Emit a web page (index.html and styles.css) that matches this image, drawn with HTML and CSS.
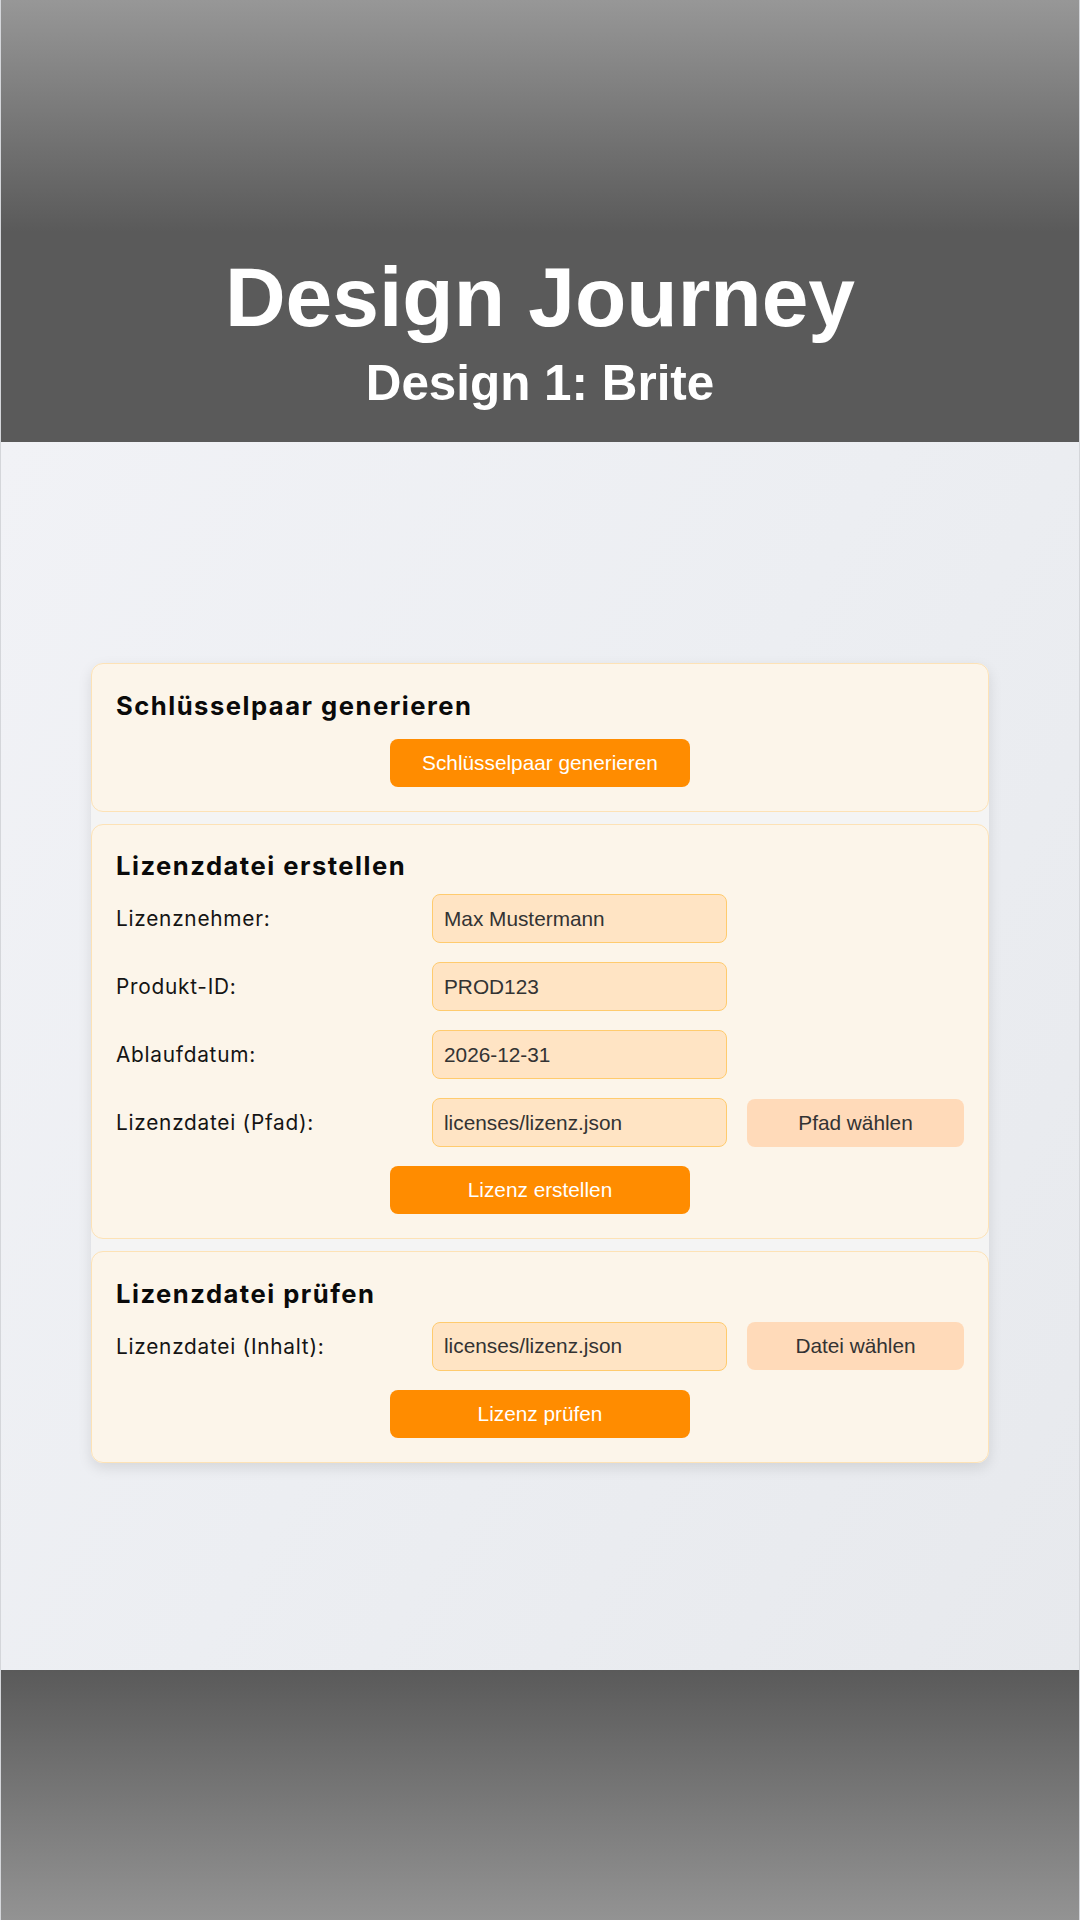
FILE: index.html
```html
<!DOCTYPE html>
<html lang="de">
<head>
<meta charset="utf-8">
<title>Design Journey – Brite</title>
<link rel="stylesheet" href="styles.css">
</head>
<body>
<header class="hero">
  <h1 class="hero-title">Design Journey</h1>
  <h2 class="hero-sub">Design 1: Brite</h2>
</header>
<main class="stage">
  <div class="panel">
    <section class="card">
      <h3 class="card-title">Schlüsselpaar generieren</h3>
      <div class="actions"><button class="btn-primary">Schlüsselpaar generieren</button></div>
    </section>
    <section class="card">
      <h3 class="card-title">Lizenzdatei erstellen</h3>
      <div class="form">
        <div class="row"><label class="label">Lizenznehmer:</label><input class="field" value="Max Mustermann"></div>
        <div class="row"><label class="label">Produkt-ID:</label><input class="field" value="PROD123"></div>
        <div class="row"><label class="label">Ablaufdatum:</label><input class="field" value="2026-12-31"></div>
        <div class="row"><label class="label">Lizenzdatei (Pfad):</label><input class="field" value="licenses/lizenz.json"><button class="btn-soft">Pfad wählen</button></div>
      </div>
      <div class="actions"><button class="btn-primary">Lizenz erstellen</button></div>
    </section>
    <section class="card">
      <h3 class="card-title">Lizenzdatei prüfen</h3>
      <div class="form">
        <div class="row"><label class="label">Lizenzdatei (Inhalt):</label><input class="field" value="licenses/lizenz.json"><button class="btn-soft">Datei wählen</button></div>
      </div>
      <div class="actions"><button class="btn-primary">Lizenz prüfen</button></div>
    </section>
  </div>
</main>
<footer class="foot"></footer>
</body>
</html>
```
FILE: styles.css
```css
* { box-sizing: border-box; }
html, body { margin: 0; padding: 0; }
body {
  width: 1080px;
  height: 1920px;
  display: flex;
  flex-direction: column;
  font-family: "Liberation Sans", Arial, sans-serif;
  border-left: 1px solid #d4d6da;
  border-right: 1px solid #d4d6da;
  overflow: hidden;
}
.hero {
  height: 442px;
  flex: none;
  background: linear-gradient(180deg, #979797 0px, #5a5a5a 232px, #5a5a5a 442px);
  display: flex;
  flex-direction: column;
  align-items: center;
  justify-content: flex-end;
  padding-bottom: 35px;
  color: #fff;
}
.hero-title {
  margin: 0 0 19px;
  font-size: 84px;
  line-height: 1;
  font-weight: 700;
}
.hero-sub {
  margin: 0;
  font-size: 49.4px;
  line-height: 1;
  font-weight: 700;
}
.stage {
  flex: 1;
  background: linear-gradient(120deg, #f1f2f6 0%, #eceef2 50%, #e7e9ed 100%);
  padding-top: 221px;
}
.panel {
  width: 898px;
  margin: 0 auto;
  display: flex;
  flex-direction: column;
  gap: 12px;
  background: #f4f4f4;
  border-radius: 12px;
  box-shadow: 0 5px 14px rgba(0, 0, 0, 0.1);
}
.card {
  background: #fcf5ea;
  border: 1.5px solid #fde2b6;
  border-radius: 12px;
  padding: 25.5px 24px 24px;
}
.card-title {
  margin: 0 0 13px;
  font-family: "Inter", "Noto Sans", sans-serif;
  font-size: 25.6px;
  line-height: 31px;
  font-weight: 700;
  color: #0a0a0a;
  letter-spacing: 1.5px;
}
.card-title + .actions { padding-top: 5px; }
.form {
  display: flex;
  flex-direction: column;
  gap: 19px;
  margin-bottom: 19px;
}
.row {
  display: grid;
  grid-template-columns: 296px 295px 217px;
  column-gap: 20px;
  align-items: center;
}
.label {
  font-family: "Inter", "Noto Sans", sans-serif;
  font-size: 20.8px;
  font-weight: 400;
  color: #141414;
  letter-spacing: 0.75px;
}
.field {
  height: 49px;
  padding: 0 11px;
  font-family: "Liberation Sans", Arial, sans-serif;
  font-size: 20.8px;
  color: #333;
  background: #ffe4c4;
  border: 1px solid #ffcb6e;
  border-radius: 8px;
  outline: none;
  width: 100%;
}
.btn-soft {
  height: 48px;
  font-family: "Liberation Sans", Arial, sans-serif;
  font-size: 20.8px;
  color: #333;
  background: #ffdab9;
  border: none;
  border-radius: 8px;
}
.actions {
  display: flex;
  justify-content: center;
}
.btn-primary {
  width: 300px;
  height: 48px;
  font-family: "Liberation Sans", Arial, sans-serif;
  font-size: 20.8px;
  color: #fff;
  background: #ff8c00;
  border: none;
  border-radius: 8px;
}
.foot {
  height: 250px;
  flex: none;
  background: linear-gradient(180deg, #5a5a5a 0%, #939393 100%);
}
```
